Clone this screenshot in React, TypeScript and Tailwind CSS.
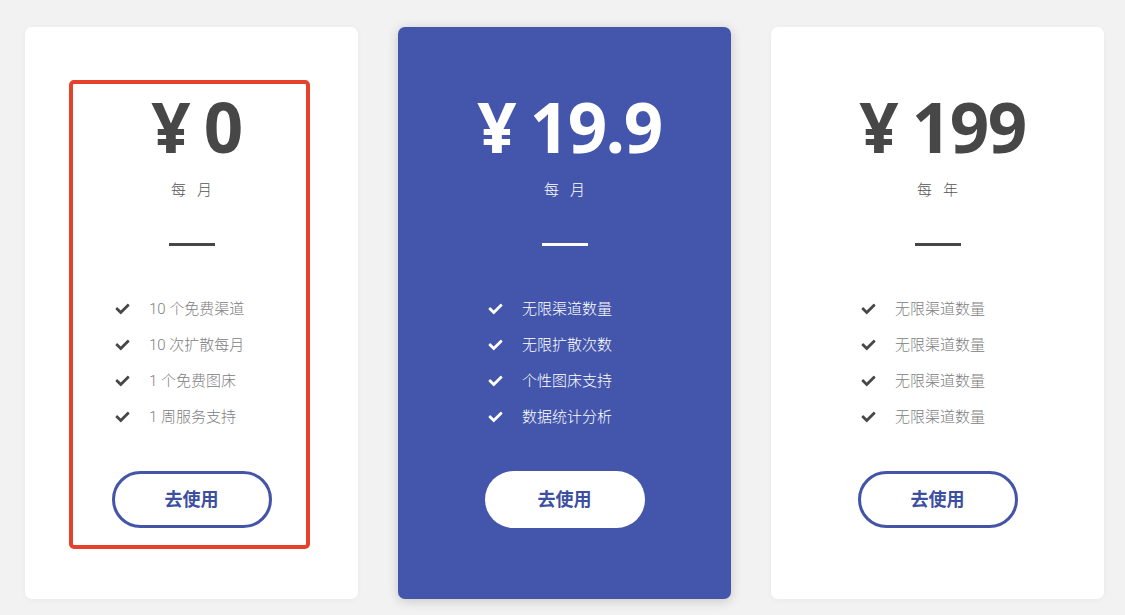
import React from "react";
import { FaCheck } from "react-icons/fa";

type Plan = {
  price: string;
  period: [string, string];
  features: string[];
  featured?: boolean;
};

const plans: Plan[] = [
  {
    price: "0",
    period: ["每", "月"],
    features: ["10 个免费渠道", "10 次扩散每月", "1 个免费图床", "1 周服务支持"],
  },
  {
    price: "19.9",
    period: ["每", "月"],
    features: ["无限渠道数量", "无限扩散次数", "个性图床支持", "数据统计分析"],
    featured: true,
  },
  {
    price: "199",
    period: ["每", "年"],
    features: ["无限渠道数量", "无限渠道数量", "无限渠道数量", "无限渠道数量"],
  },
];

const cjk = "font-['Roboto','Noto_Sans_CJK_SC',sans-serif]";

function Card({ plan, annotated }: { plan: Plan; annotated?: boolean }) {
  const f = plan.featured;
  return (
    <div
      className={`relative flex h-[572px] w-[333px] flex-col items-center rounded-[7px] pt-[64px] ${
        f ? "bg-[#4356ab] shadow-[0_2px_12px_rgba(0,0,0,0.18)]" : "bg-white shadow-[0_1px_6px_rgba(0,0,0,0.04)]"
      }`}
    >
      <div
        className={`ml-[10px] flex h-[70px] font-['Open_Sans',sans-serif] text-[69px] font-bold leading-[70px] ${
          f ? "text-white" : "text-[#474747]"
        }`}
      >
        <span>¥</span>
        <span className="ml-[13px] tracking-[-1.5px]">{plan.price}</span>
      </div>
      <div
        className={`mt-[19px] flex h-[20px] items-center gap-[11px] ${cjk} text-[15px] font-light leading-[20px] ${
          f ? "text-white" : "text-[#555]"
        }`}
      >
        <span>{plan.period[0]}</span>
        <span>{plan.period[1]}</span>
      </div>
      <div className={`mt-[43px] h-[3px] w-[46px] ${f ? "bg-white" : "bg-[#474747]"}`} />
      <ul className="mt-[45px] flex flex-col self-stretch pl-[90px]">
        {plan.features.map((t, i) => (
          <li key={i} className="flex h-[36px] items-center">
            <FaCheck className={`h-[14px] w-[15px] ${f ? "text-white" : "text-[#474747]"}`} />
            <span
              className={`ml-[19px] ${cjk} text-[15px] font-light ${f ? "text-white" : "text-[#808080]"}`}
            >
              {t}
            </span>
          </li>
        ))}
      </ul>
      <button
        className={`mt-[36px] flex h-[57px] w-[160px] items-center justify-center rounded-full ${cjk} text-[18px] font-bold text-[#3d4f9f] ${
          f ? "bg-white" : "border-[3px] border-[#4455a8] bg-white"
        }`}
      >
        去使用
      </button>
      {annotated && (
        <div className="pointer-events-none absolute left-[44px] top-[53px] h-[469px] w-[241px] rounded-[5px] border-[4px] border-[#e5412b]" />
      )}
    </div>
  );
}

export default function App() {
  return (
    <div className="h-[615px] w-[1125px] overflow-hidden bg-[#f2f2f2] pl-[25px] pt-[27px]">
      <div className="flex gap-[40px]">
        {plans.map((p, i) => (
          <Card key={i} plan={p} annotated={i === 0} />
        ))}
      </div>
    </div>
  );
}
